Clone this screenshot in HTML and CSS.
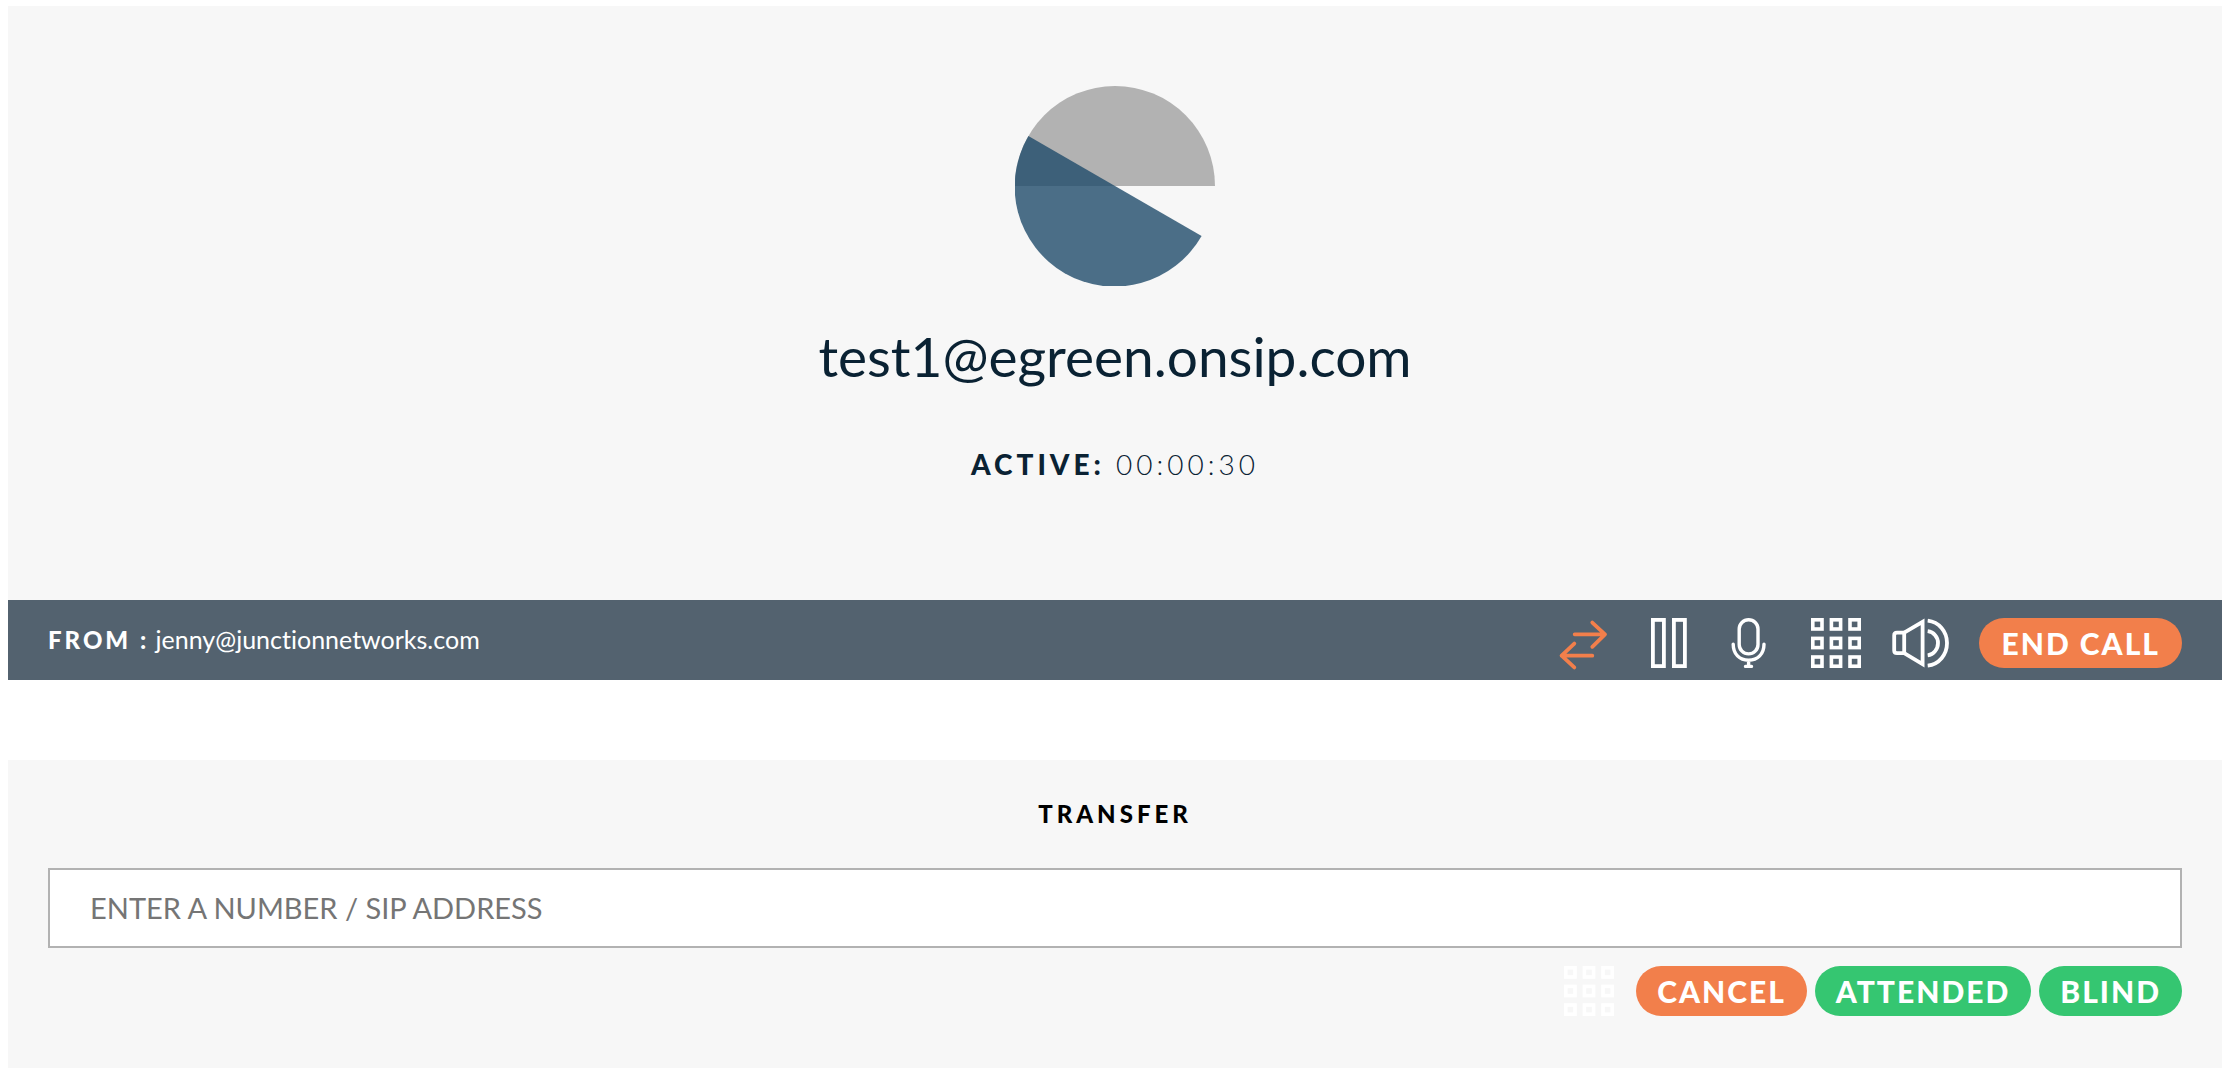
FILE: index.html
```
<!DOCTYPE html>
<html lang="en">
<head>
    <meta charset="UTF-8">
    <meta name="viewport" content="width=device-width, initial-scale=1">
    <title>Call</title>
    <link rel="stylesheet" href="styles.css">
</head>
<body>
    <!-- icon shared by the call bar and the transfer form -->
    <svg class="sprite" aria-hidden="true">
        <symbol id="keypad" viewBox="0 0 50 50">
            <g fill="none" stroke="currentColor" stroke-width="3.6">
                <rect x="1.8" y="1.8" width="9.2" height="9.2"/>
                <rect x="20.4" y="1.8" width="9.2" height="9.2"/>
                <rect x="39" y="1.8" width="9.2" height="9.2"/>
                <rect x="1.8" y="20.4" width="9.2" height="9.2"/>
                <rect x="20.4" y="20.4" width="9.2" height="9.2"/>
                <rect x="39" y="20.4" width="9.2" height="9.2"/>
                <rect x="1.8" y="39" width="9.2" height="9.2"/>
                <rect x="20.4" y="39" width="9.2" height="9.2"/>
                <rect x="39" y="39" width="9.2" height="9.2"/>
            </g>
        </symbol>
    </svg>

    <section class="call">
        <div class="call-info">
            <svg class="avatar" viewBox="0 0 200 200" aria-hidden="true">
                <path fill="#b2b2b2" d="M0 100A100 100 0 0 1 200 100Z"/>
                <path fill="#1f4b6a" fill-opacity=".8" d="M13.4 50A100 100 0 1 0 186.6 150Z"/>
            </svg>
            <h1>test1@egreen.onsip.com</h1>
            <p class="status"><b>ACTIVE:</b> <span>00:00:30</span></p>
        </div>

        <div class="call-bar">
            <p class="from"><b>FROM :</b> <span>jenny@junctionnetworks.com</span></p>
            <div class="controls">
                <div class="icons">
                    <button type="button" class="icon active" aria-label="Transfer">
                        <svg width="48" height="50" viewBox="0 0 48 50" fill="none" stroke="currentColor" stroke-width="3.8" stroke-linecap="round" stroke-linejoin="round">
                            <path d="M15.7 16.3H46M33.3 4.6L46 16.3L33.3 28.8M33.3 37.7H2.6M15.3 25.6L2.6 37.7L15.3 49.4"/>
                        </svg>
                    </button>
                    <button type="button" class="icon" aria-label="Hold">
                        <svg width="36" height="50" viewBox="0 0 36 50" fill="none" stroke="currentColor" stroke-width="3.8">
                            <rect x="1.9" y="1.9" width="11" height="46.2"/>
                            <rect x="22.9" y="1.9" width="11" height="46.2"/>
                        </svg>
                    </button>
                    <button type="button" class="icon" aria-label="Mute">
                        <svg width="36" height="50" viewBox="0 0 36 50" fill="none" stroke="currentColor" stroke-width="3.4" stroke-linecap="round">
                            <rect x="8.2" y="1.7" width="18.8" height="34.2" rx="9.4"/>
                            <path d="M2.2 26.2C2.2 36 8.5 42.2 17.6 42.2S33 36 33 26.2M17.6 42.5V48.4M14.5 48.4H20.5"/>
                        </svg>
                    </button>
                    <button type="button" class="icon" aria-label="Keypad">
                        <svg width="50" height="50"><use href="#keypad"/></svg>
                    </button>
                </div>
                <button type="button" class="icon" aria-label="Volume">
                    <svg width="58" height="50" viewBox="0 0 58 50" fill="none" stroke="currentColor" stroke-width="3.8">
                        <path d="M13.2 14.6H6Q3.2 14.6 3.2 17.2V32.6Q3.2 35.2 6 35.2H13.2Z"/>
                        <path d="M13.2 14.6L31.6 3.8V46.2L13.2 35.2"/>
                        <path d="M36.7 13.2C42.8 14 47 19 47 24.9S42.8 36.6 36.7 37.4M36.7 2.7C48 4 56 13.5 56 25S48 46.5 36.7 47.6"/>
                    </svg>
                </button>
                <button type="button" class="btn danger">END CALL</button>
            </div>
        </div>
    </section>

    <form class="transfer">
        <h2><label for="target">TRANSFER</label></h2>
        <input type="text" id="target" placeholder="ENTER A NUMBER / SIP ADDRESS">
        <div class="actions">
            <button type="button" class="icon" aria-label="Keypad">
                <svg width="50" height="50"><use href="#keypad"/></svg>
            </button>
            <button type="button" class="btn danger">CANCEL</button>
            <button type="button" class="btn">ATTENDED</button>
            <button type="button" class="btn">BLIND</button>
        </div>
    </form>
</body>
</html>
```
FILE: styles.css
```
*{
    box-sizing:border-box;
}
body{
    margin:6px 14px 10px 8px;
    background:#fff;
    font-family:Lato, "Open Sans", sans-serif;
    font-variant-ligatures:none;
}
h1, h2, p{
    margin:0;
}
.sprite{
    display:none;
}

.call{
    margin-bottom:80px;
    color:#0a2233;
    background:#f7f7f7;
}
.call-info{
    padding:80px 40px 116px;
    text-align:center;
}
.avatar{
    display:block;
    width:200px;
    height:200px;
    margin:0 auto 30px;
}
h1{
    font-size:55px;
    font-weight:400;
    line-height:80px;
}
.status{
    margin-top:48px;
    font-size:28px;
    line-height:40px;
    letter-spacing:4px;
}
.status b{
    font-weight:900;
}
.status span{
    font-weight:300;
}

.call-bar{
    display:flex;
    flex-wrap:wrap;
    align-items:center;
    justify-content:space-between;
    min-height:80px;
    padding:15px 40px 9px;
    color:#fff;
    background:#53626f;
}
.from{
    padding-bottom:8px;
    font-size:25px;
    line-height:40px;
}
.from b{
    font-size:24px;
    font-weight:900;
    letter-spacing:3px;
}
.controls{
    display:flex;
    flex-wrap:wrap;
    align-items:center;
    gap:30px;
}
.icons{
    display:flex;
    gap:44px;
}
.icon{
    padding:0;
    border:0;
    color:#fff;
    background:none;
    cursor:pointer;
}
.icon svg{
    display:block;
    overflow:visible;
}
.icon.active{
    color:#f27f4b;
}
.btn{
    height:50px;
    padding:0 22px;
    border:0;
    border-radius:25px;
    color:#fff;
    background:#35c671;
    font-family:inherit;
    font-size:30px;
    font-weight:900;
    letter-spacing:2px;
    cursor:pointer;
}
.btn.danger{
    background:#f27f4b;
}

.transfer{
    padding:34px 40px 52px;
    background:#f7f7f7;
}
h2{
    margin-bottom:34px;
    color:#000;
    text-align:center;
    font-size:24px;
    font-weight:900;
    line-height:40px;
    letter-spacing:4px;
}
.transfer input{
    display:block;
    width:100%;
    height:80px;
    padding:0 40px 2px;
    border:2px solid #b2b2b2;
    background:#fff;
    font-family:inherit;
    font-size:29px;
}
.transfer input::placeholder{
    color:#757575;
}
.actions{
    display:flex;
    flex-wrap:wrap;
    justify-content:flex-end;
    gap:8px;
    margin-top:18px;
}
.actions .icon{
    margin-right:14px;
}
.actions .btn{
    padding:0 21px;
}
```
